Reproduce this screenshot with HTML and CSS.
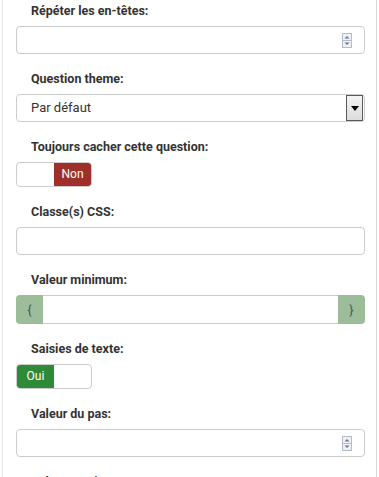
FILE: index.html
```html
<!DOCTYPE html>
<html lang="fr">
<head>
    <meta charset="UTF-8">
    <meta name="viewport" content="width=device-width, initial-scale=1.0">
    <title>Propriétés de la question</title>
    <link rel="stylesheet" href="styles.css">
</head>
<body>

    <!-- Panneau des options -->
    <div class="panel">

        <div class="field">
            <div class="label">Répéter les en-têtes:</div>
            <div class="input number">
                <span class="spinner">
                    <svg width="10" height="15" viewBox="0 0 10 15">
                        <rect x="0.5" y="0.5" width="9" height="14" fill="#eef0f4" stroke="#b4bccb"/>
                        <line x1="0.5" y1="7.5" x2="9.5" y2="7.5" stroke="#b4bccb"/>
                        <path d="M2.5 5.5 L5 3 L7.5 5.5 Z" fill="#6a7892"/>
                        <path d="M2.5 9.5 L5 12 L7.5 9.5 Z" fill="#6a7892"/>
                    </svg>
                </span>
            </div>
        </div>

        <div class="field">
            <div class="label">Question theme:</div>
            <div class="select">
                <span class="select-text">Par défaut</span>
                <span class="select-btn">
                    <svg width="8" height="5" viewBox="0 0 8 5"><path d="M0 0 L8 0 L4 5 Z" fill="#000"/></svg>
                </span>
            </div>
        </div>

        <div class="field">
            <div class="label">Toujours cacher cette question:</div>
            <div class="toggle">
                <span class="toggle-part"></span>
                <span class="toggle-part no">Non</span>
            </div>
        </div>

        <div class="field">
            <div class="label">Classe(s) CSS:</div>
            <div class="input"></div>
        </div>

        <div class="field">
            <div class="label">Valeur minimum:</div>
            <div class="input-group">
                <span class="addon">{</span>
                <span class="group-input"></span>
                <span class="addon">}</span>
            </div>
        </div>

        <div class="field">
            <div class="label">Saisies de texte:</div>
            <div class="toggle">
                <span class="toggle-part yes">Oui</span>
                <span class="toggle-part"></span>
            </div>
        </div>

        <div class="field">
            <div class="label">Valeur du pas:</div>
            <div class="input number">
                <span class="spinner">
                    <svg width="10" height="15" viewBox="0 0 10 15">
                        <rect x="0.5" y="0.5" width="9" height="14" fill="#eef0f4" stroke="#b4bccb"/>
                        <line x1="0.5" y1="7.5" x2="9.5" y2="7.5" stroke="#b4bccb"/>
                        <path d="M2.5 5.5 L5 3 L7.5 5.5 Z" fill="#6a7892"/>
                        <path d="M2.5 9.5 L5 12 L7.5 9.5 Z" fill="#6a7892"/>
                    </svg>
                </span>
            </div>
        </div>

        <div class="field">
            <div class="label">Valeur maximum:</div>
            <div class="input"></div>
        </div>

    </div>

</body>
</html>
```

FILE: styles.css
```css
body {
    margin: 0;
    font-family: Roboto, "Liberation Sans", sans-serif;
    color: #333;
    background: #fff;
    overflow: hidden;
}

/* Panneau avec les lignes verticales */
.panel {
    margin: 0 2px;
    padding: 2px 11px 0 13px;
    border-left: 1px solid #e4e4e4;
    border-right: 1px solid #d9d9d9;
    min-height: 600px;
}
.field {
    margin-bottom: 16px;
}
.label {
    font-size: 12.5px;
    font-weight: bold;
    line-height: 18px;
    padding-left: 15px;
    margin-bottom: 6px;
}

/* Champs de saisie */
.input {
    height: 28px;
    box-sizing: border-box;
    border: 1px solid #ccc;
    border-radius: 4px;
    background: #fff;
    display: flex;
    align-items: center;
    justify-content: flex-end;
    padding-right: 12px;
}
.spinner {
    display: flex;
}

/* Liste déroulante */
.select {
    height: 28px;
    box-sizing: border-box;
    border: 1px solid #ccc;
    border-radius: 4px;
    display: flex;
    align-items: stretch;
    justify-content: space-between;
    padding: 0 1px 0 14px;
}
.select-text {
    font-size: 13px;
    line-height: 26px;
}
.select-btn {
    width: 15px;
    border: 1px solid #5a5a5a;
    background: linear-gradient(#f4f4f4, #dcdcdc);
    display: flex;
    align-items: center;
    justify-content: center;
}

/* Interrupteurs Oui / Non */
.toggle {
    display: flex;
    width: 76px;
    height: 25px;
    box-sizing: border-box;
    border: 1px solid #ccc;
    border-radius: 4px;
    overflow: hidden;
}
.toggle-part {
    width: 50%;
    font-size: 12px;
    line-height: 23px;
    color: #fff;
    text-align: center;
}
.toggle-part.no {
    background-color: #9f2f2b;
}
.toggle-part.yes {
    background-color: #2f8a38;
}

/* Groupe avec accolades */
.input-group {
    display: flex;
    height: 29px;
    box-sizing: border-box;
}
.addon {
    width: 27px;
    background-color: #9dbd9a;
    color: #555;
    font-size: 13px;
    display: flex;
    align-items: center;
    justify-content: center;
}
.addon:first-child {
    border-radius: 4px 0 0 4px;
}
.addon:last-child {
    border-radius: 0 4px 4px 0;
}
.group-input {
    flex: 1;
    border-top: 1px solid #ccc;
    border-bottom: 1px solid #ccc;
    background: #fff;
}
```
